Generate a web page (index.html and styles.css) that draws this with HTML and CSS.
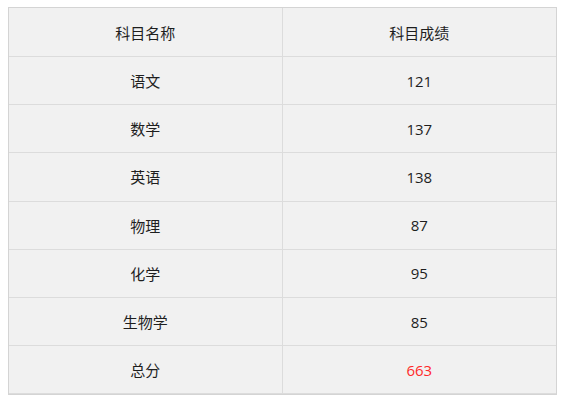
FILE: index.html
```html
<!DOCTYPE html>
<html lang="zh-CN">
<head>
<meta charset="utf-8">
<link rel="stylesheet" href="styles.css">
</head>
<body>
<table class="scores">
  <tr><th>科目名称</th><th>科目成绩</th></tr>
  <tr><td>语文</td><td>121</td></tr>
  <tr><td>数学</td><td>137</td></tr>
  <tr><td>英语</td><td>138</td></tr>
  <tr><td>物理</td><td>87</td></tr>
  <tr><td>化学</td><td>95</td></tr>
  <tr><td>生物学</td><td>85</td></tr>
  <tr><td>总分</td><td class="total">663</td></tr>
</table>
</body>
</html>
```
FILE: styles.css
```css
html, body { margin: 0; padding: 0; background: #fff; }
body { padding: 7px 8px; }
.scores {
  width: 549px;
  border-collapse: separate;
  border-spacing: 0;
  border: 1px solid #d4d4d4;
  background: #f1f1f1;
  font-family: "Open Sans", "Noto Sans CJK SC", sans-serif;
  font-size: 15px;
  color: #1e1e1e;
}
.scores th, .scores td {
  height: 47.2px;
  padding: 0;
  border: 0 solid #dcdcdc;
  border-bottom-width: 1px;
  text-align: center;
  vertical-align: middle;
  font-weight: normal;
}
.scores th { height: 48px; }
.scores th:first-child, .scores td:first-child { border-right: 1px solid #dcdcdc; width: 50%; }
.total { color: #ff2a2a; }
```
